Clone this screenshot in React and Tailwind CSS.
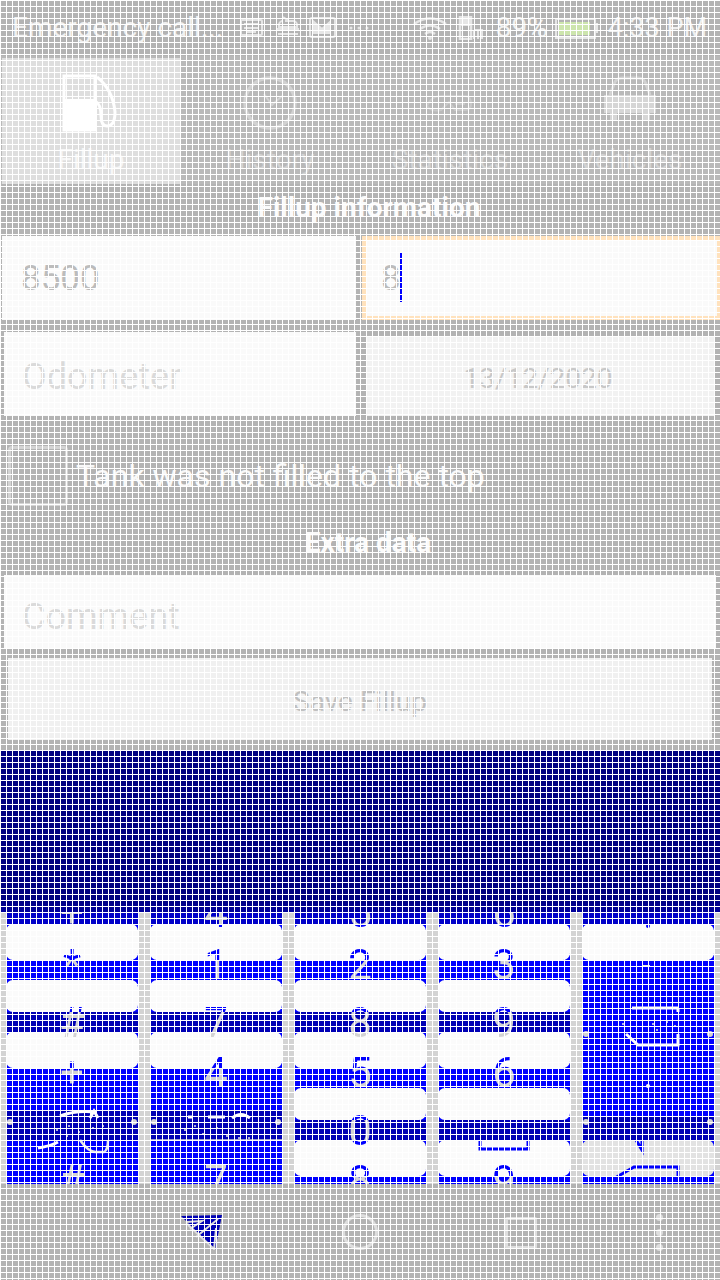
import React from 'react';

const bandsA = [
  { h: 'h-[12px]', c: 'bg-[#0000c8]' },
  { h: 'h-[36px]', c: 'bg-[#fbfbfb] rounded-[7px]' },
  { h: 'h-[20px]', c: '' },
  { h: 'h-[32px]', c: 'bg-[#fbfbfb] rounded-[7px]' },
  { h: 'h-[20px]', c: 'bg-[#0000b4]' },
  { h: 'h-[36px]', c: 'bg-[#fbfbfb] rounded-[7px]' },
  { h: 'h-[42px]', c: '' },
  { h: 'h-[30px]', c: 'bg-[#0000b4]' },
  { h: 'h-[44px]', c: '' },
];

const bandsB = [
  { h: 'h-[12px]', c: 'bg-[#0000c8]' },
  { h: 'h-[36px]', c: 'bg-[#fbfbfb] rounded-[7px]' },
  { h: 'h-[20px]', c: '' },
  { h: 'h-[32px]', c: 'bg-[#fbfbfb] rounded-[7px]' },
  { h: 'h-[20px]', c: 'bg-[#0000b4]' },
  { h: 'h-[36px]', c: 'bg-[#fbfbfb] rounded-[7px]' },
  { h: 'h-[20px]', c: '' },
  { h: 'h-[32px]', c: 'bg-[#fbfbfb] rounded-[7px]' },
  { h: 'h-[20px]', c: 'bg-[#0000b4]' },
  { h: 'h-[36px]', c: 'bg-[#fbfbfb] rounded-[7px]' },
  { h: 'h-[8px]', c: '' },
];

const bandsC = [
  { h: 'h-[12px]', c: 'bg-[#0000c8]' },
  { h: 'h-[36px]', c: 'bg-[#fbfbfb] rounded-[7px]' },
  { h: 'h-[157px]', c: '' },
  { h: 'h-[23px]', c: 'bg-[#0000b4]' },
  { h: 'h-[36px]', c: 'bg-[#e2e2e2] rounded-[7px]' },
  { h: 'h-[8px]', c: '' },
];

// glyph colour flips where it crosses a key, so each one has a hard stop
const topStop = 'bg-[linear-gradient(#d3d3d3_32px,#0000ff_32px)]';
const midStop = 'bg-[linear-gradient(#0000ff_16px,#d3d3d3_16px)]';
const shortStop = 'bg-[linear-gradient(#0000ff_10px,#d3d3d3_10px)]';
const zeroStop = 'bg-[linear-gradient(#0000ff_10px,#d3d3d3_10px,#d3d3d3_30px,#0000ff_30px)]';
const plain = 'bg-[linear-gradient(#d3d3d3,#d3d3d3)]';

const columns = [
  {
    bands: bandsA,
    glyphs: [
      { t: '+', c: `top-[-20px] ${topStop}` },
      { t: '*', c: `top-[32px] ${midStop}` },
      { t: '#', c: `top-[90px] ${shortStop}` },
      { t: '+', c: `top-[140px] ${midStop}` },
      { t: '#', c: `top-[248px] ${plain}` },
    ],
    marks: (
      <>
        <path d="M54 204Q70 198 90 200M84 206L88 199L92 206M32 236Q45 234 52 230" stroke="#fff" strokeWidth="3" fill="none" />
        <path d="M74 228Q82 240 90 240L98 240Q102 238 102 228" stroke="#e8e8e8" strokeWidth="2.5" fill="none" />
        <path d="M50 218h2M62 214h2M72 220h2M86 216h2M96 214h2M60 224h2" stroke="#e8e8e8" strokeWidth="1.5" />
        <circle cx="4" cy="210" r="3" fill="#d3d3d3" />
        <circle cx="128" cy="210" r="3" fill="#d3d3d3" />
      </>
    ),
  },
  {
    bands: bandsA,
    glyphs: [
      { t: '4', c: `top-[-20px] ${topStop}` },
      { t: '1', c: `top-[32px] ${midStop}` },
      { t: '7', c: `top-[90px] ${shortStop}` },
      { t: '4', c: `top-[140px] ${midStop}` },
      { t: '7', c: `top-[248px] ${plain}` },
    ],
    marks: (
      <>
        <path d="M38 205h4M58 205h17M82 206Q91 199 100 206" stroke="#fff" strokeWidth="3" fill="none" />
        <path d="M0 228H132" stroke="#d3d3d3" strokeWidth="1.5" />
        <path d="M34 218h2M44 214h2M52 222h2M66 216h2M76 224h2M88 226h2M98 226h2" stroke="#e8e8e8" strokeWidth="1.5" />
        <circle cx="4" cy="210" r="3" fill="#d3d3d3" />
        <circle cx="128" cy="210" r="3" fill="#d3d3d3" />
      </>
    ),
  },
  {
    bands: bandsB,
    glyphs: [
      { t: '5', c: `top-[-20px] ${topStop}` },
      { t: '2', c: `top-[32px] ${midStop}` },
      { t: '8', c: `top-[90px] ${shortStop}` },
      { t: '5', c: `top-[140px] ${midStop}` },
      { t: '0', c: `top-[198px] ${zeroStop}` },
      { t: '8', c: `top-[248px] ${midStop}` },
    ],
    marks: null,
  },
  {
    bands: bandsB,
    glyphs: [
      { t: '6', c: `top-[-20px] ${topStop}` },
      { t: '3', c: `top-[32px] ${midStop}` },
      { t: '9', c: `top-[90px] ${shortStop}` },
      { t: '6', c: `top-[140px] ${midStop}` },
      { t: '9', c: `top-[248px] ${midStop}` },
    ],
    marks: <path d="M42 228V237H90V228" stroke="#0000ff" strokeWidth="3" fill="none" />,
  },
  {
    bands: bandsC,
    glyphs: [],
    marks: (
      <>
        <circle cx="66" cy="14" r="2" fill="#0000ff" />
        <path d="M60 54h8" stroke="#e8e8e8" strokeWidth="2" />
        <path d="M50 96H96M96 96V100" stroke="#fff" strokeWidth="3" fill="none" />
        <path d="M44 122L56 133H96V122" stroke="#fff" strokeWidth="3" fill="none" />
        <path d="M40 112h2M70 112h2M84 110h2M92 114h2M74 118h2" stroke="#e8e8e8" strokeWidth="1.5" />
        <circle cx="66" cy="174" r="2" fill="#fff" />
        <circle cx="4" cy="210" r="3" fill="#d3d3d3" />
        <circle cx="128" cy="210" r="3" fill="#d3d3d3" />
        <circle cx="4" cy="122" r="3" fill="#d3d3d3" />
        <circle cx="128" cy="122" r="3" fill="#d3d3d3" />
        <path d="M26 270L52 255H96V272" stroke="#0000ff" strokeWidth="3" fill="none" />
        <path d="M54 228L60 238V228" stroke="#0000ff" strokeWidth="3" fill="none" />
      </>
    ),
  },
];

const StatusIcons = () => (
  <svg viewBox="0 0 130 24" className="w-[130px] h-[24px] ml-[15px]" fill="none" stroke="#e6e6e6" strokeWidth="2">
    <rect x="1" y="4" width="21" height="15" rx="1" />
    <path d="M4 8h15M4 12h15M7 16h9" />
    <path d="M43 1l6 4M45 5h8a4 4 0 0 1 4 4v2H39V9a4 4 0 0 1 4-4M37 13h22M38 18h20" />
    <rect x="70" y="2" width="25" height="19" rx="2" />
    <path d="M74 6l8 7 8-7v11H74z" fill="#e6e6e6" />
    <circle cx="111" cy="12" r="1.5" fill="#e6e6e6" stroke="none" />
    <circle cx="119" cy="12" r="1.5" fill="#e6e6e6" stroke="none" />
    <circle cx="127" cy="12" r="1.5" fill="#e6e6e6" stroke="none" />
  </svg>
);

const Wifi = () => (
  <svg viewBox="0 0 36 24" className="w-[36px] h-[24px]" fill="none" stroke="#e6e6e6" strokeWidth="2.5">
    <path d="M2 8Q18 -3 34 8M8 13Q18 6 28 13M13 18Q18 14 23 18" />
    <circle cx="18" cy="22" r="2" fill="#e6e6e6" stroke="none" />
  </svg>
);

const Sim = () => (
  <svg viewBox="0 0 26 24" className="w-[26px] h-[24px] ml-[10px]" fill="none">
    <path d="M2 1H13V23H2z" stroke="#e6e6e6" strokeWidth="2.5" />
    <path d="M2 1H13V10H2z" fill="#e6e6e6" />
    <path d="M16 14h8v9M20 14v9M16 23v-9" stroke="#e6e6e6" strokeWidth="2" />
  </svg>
);

const Battery = () => (
  <div className="flex items-center ml-[7px]">
    <div className="w-[41px] h-[21px] border-2 border-[#e6e6e6] p-[2px]">
      <div className="w-[31px] h-full bg-[#cde5ad]" />
    </div>
    <div className="w-[2px] h-[10px] bg-[#e6e6e6]" />
  </div>
);

const FuelIcon = () => (
  <svg viewBox="0 0 60 58" className="w-[60px] h-[58px]" fill="none">
    <path d="M3 2H34V56H3z" stroke="#fff" strokeWidth="3" />
    <path d="M2 25H35V57H2z" fill="#fff" />
    <path d="M36 3Q52 16 54 38Q54 52 46 52Q40 52 40 42Q40 30 34 27" stroke="#fff" strokeWidth="3" />
  </svg>
);

const ClockIcon = () => (
  <svg viewBox="0 0 58 58" className="w-[58px] h-[58px]" fill="none" stroke="#d2d2d2" strokeWidth="3.5">
    <circle cx="29" cy="29" r="25" />
    <path d="M23 20L31 31L41 22" strokeWidth="2" />
  </svg>
);

const StatsIcon = () => (
  <svg viewBox="0 0 58 58" className="w-[58px] h-[58px]" fill="none" stroke="#c9c9c9" strokeWidth="2">
    <path d="M6 32Q10 22 20 22H44Q50 22 50 30Q50 36 44 36H34L28 28L20 36Q10 38 6 32M34 30H44" />
  </svg>
);

const CarIcon = () => (
  <svg viewBox="0 0 58 50" className="w-[58px] h-[50px] -mt-[6px]" fill="none">
    <path d="M9 20L13 9Q15 3 21 3H37Q43 3 45 9L49 20" stroke="#d2d2d2" strokeWidth="3" />
    <path d="M3 20H55V38H49V46H42V38H16V46H9V38H3z" fill="#d6d6d6" />
  </svg>
);

const tabs = [
  { label: 'Fillup', icon: <FuelIcon />, box: 'bg-[#dedede] text-[#f6f6f6]' },
  { label: 'History', icon: <ClockIcon />, box: 'text-[#d2d2d2]' },
  { label: 'Statistics', icon: <StatsIcon />, box: 'text-[#d2d2d2]' },
  { label: 'Vehicles', icon: <CarIcon />, box: 'text-[#d2d2d2]' },
];

const App = () => {
  return (
    <div className="relative w-[720px] h-[1280px] overflow-hidden flex flex-col bg-[#b3b3b3] font-['Roboto',sans-serif]">
      {/* status bar */}
      <div className="h-[56px] flex items-center pl-[12px] pr-[13px] text-[28px] text-[#f0f0f0]">
        <span className="w-[213px] whitespace-nowrap">Emergency call...</span>
        <StatusIcons />
        <div className="ml-auto flex items-center">
          <Wifi />
          <Sim />
          <span className="ml-[12px]">89%</span>
          <Battery />
          <span className="ml-[10px] text-[27px] whitespace-nowrap">4:33 PM</span>
        </div>
      </div>

      {/* tabs */}
      <div className="h-[128px] flex bg-[#b9b9b9] pt-[2px] pl-[2px]">
        {tabs.map((tab, i) => (
          <div key={tab.label} className={`flex flex-col items-center ${i === 0 ? 'w-[178px]' : 'w-[180px]'} ${tab.box}`}>
            <div className="h-[75px] pt-[15px] flex items-center">{tab.icon}</div>
            <span className="text-[28px] leading-[30px] mt-[12px]">{tab.label}</span>
          </div>
        ))}
      </div>

      <div className="h-[46px] mt-[1px] mb-[5px] pl-[18px] flex items-center justify-center text-[28px] font-bold text-[#fafafa]">Fillup information</div>

      {/* odometer / volume inputs */}
      <div className="h-[84px] flex pl-[2px] gap-[6px]">
        <div className="w-[354px] bg-[#fafafa] flex items-center pl-[19px] pt-[3px] text-[35px] text-[#bcbcbc]">8500</div>
        <div className="relative w-[358px] bg-[#fafafa] border-y-[4px] border-l-[5px] border-r-[3px] border-[#ffe2bd] flex items-center pl-[14px] pt-[3px] text-[35px] text-[#bcbcbc]">
          8
          <span className="absolute left-[33px] top-[13px] w-[2px] h-[49px] bg-[#0000ff]" />
        </div>
      </div>
      <div className="h-[84px] mt-[12px] flex pl-[4px] gap-[10px]">
        <div className="w-[352px] bg-[#fafafa] flex items-center pl-[18px] pt-[5px] text-[36px] text-[#dadada]">Odometer</div>
        <div className="w-[348px] h-[80px] mt-[4px] bg-[#f2f2f2] flex items-center justify-center pt-[5px] pr-[4px] text-[28px] text-[#c8c8c8]">13/12/2020</div>
      </div>

      {/* partial fill */}
      <div className="h-[60px] mt-[30px] flex items-center pl-[8px]">
        <div className="w-[60px] h-[60px] border-[3px] border-[#d4d4d4] rounded-[4px]" />
        <span className="ml-[8px] text-[32px] text-[#f8f8f8] whitespace-nowrap">Tank was not filled to the top</span>
      </div>

      <div className="h-[69px] pt-[5px] pl-[16px] flex items-center justify-center text-[28px] font-bold text-[#fafafa]">Extra data</div>

      <div className="h-[73px] mx-[4px] bg-[#fafafa] flex items-center pl-[18px] pt-[10px] text-[36px] text-[#dadada]">Comment</div>
      <div className="h-[82px] mx-[8px] mt-[10px] bg-[#f0f0f0] flex items-center justify-center pt-[5px] text-[28px] text-[#c0c0c0]">Save Fillup</div>

      {/* keyboard */}
      <div className="mt-[10px] h-[162px] bg-[linear-gradient(#000080_92%,#00009c)]" />
      <div className="h-[272px] flex gap-[12px] px-[6px] bg-[#d3d3d3]">
        {columns.map((col, i) => (
          <div key={i} className="relative w-[132px] h-full overflow-hidden bg-[#0000ff] flex flex-col">
            {col.bands.map((band, j) => (
              <div key={j} className={`${band.h} ${band.c}`} />
            ))}
            {col.glyphs.map((g, j) => (
              <span
                key={j}
                className={`absolute left-0 w-full h-[42px] text-center text-[42px] leading-[42px] bg-clip-text text-transparent ${g.c}`}
              >
                {g.t}
              </span>
            ))}
            {col.marks && (
              <svg viewBox="0 0 132 272" className="absolute inset-0 w-[132px] h-[272px]">
                {col.marks}
              </svg>
            )}
          </div>
        ))}
      </div>

      {/* nav bar */}
      <div className="relative h-[96px]">
        <svg viewBox="0 0 42 38" className="absolute left-[180px] top-[29px] w-[42px] h-[38px]" fill="none">
          <path d="M1 3L42 2L35 37z" fill="#0000b4" />
          <path d="M6 9L22 8L10 16M8 12L33 35M38 6L16 24M36 15L34 37" stroke="#dcdcdc" strokeWidth="2" />
        </svg>
        <div className="absolute left-[342px] top-[30px] w-[36px] h-[36px] rounded-full border-[3px] border-[#dedede]" />
        <div className="absolute left-[505px] top-[33px] w-[32px] h-[32px] rounded-[2px] border-[3px] border-[#dedede]" />
        <div className="absolute left-[656px] top-[30px] flex flex-col gap-[8px]">
          <div className="w-[7px] h-[7px] rounded-full bg-[#dedede]" />
          <div className="w-[7px] h-[7px] rounded-full bg-[#dedede]" />
          <div className="w-[7px] h-[7px] rounded-full bg-[#dedede]" />
        </div>
      </div>

      {/* mesh that lies over the whole picture */}
      <div className="absolute inset-0 pointer-events-none bg-[linear-gradient(to_right,#fff_1px,transparent_1px),linear-gradient(to_bottom,#fff_1px,transparent_1px)] bg-[size:6px_6px]" />
    </div>
  );
};

export default App;
